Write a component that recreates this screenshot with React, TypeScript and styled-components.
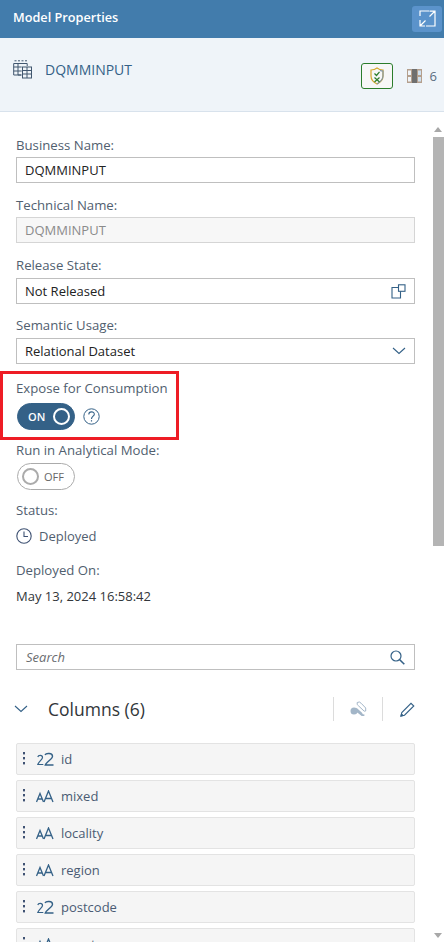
import React from "react";
import styled, { createGlobalStyle } from "styled-components";

const Global = createGlobalStyle`
  html, body { margin: 0; padding: 0; background: #fff; overflow: hidden; }
  body { font-family: "Open Sans", "Noto Sans", Arial, sans-serif; }
  * { box-sizing: border-box; }
`;
const Page = styled.div`width: 444px; height: 942px; overflow: hidden; position: relative; display: flex; flex-direction: column;`;
const TopBar = styled.header`height: 38px; flex: none; background: #427cac; display: flex; align-items: center; justify-content: space-between; padding: 0 2px 0 13px; color: #fff; font-size: 12.7px; font-weight: 600;`;
const TopTitle = styled.span`margin-top: -4px;`;
const ExpandButton = styled.div`width: 30px; height: 26px; margin-top: -1px; border-radius: 3px; background: #5b93cb; display: flex; align-items: center; justify-content: center;`;
const ObjectHeader = styled.section`height: 74px; flex: none; background: #eff4f9; border-bottom: 1px solid #d8e2ec; display: flex; align-items: center; padding: 0 7px 11px 13px;`;
const ObjectName = styled.div`margin-left: 13px; font-size: 14px; color: #346187; flex: 1;`;
const ShieldButton = styled.div`width: 32px; height: 26px; border: 1px solid #2b7d2b; border-radius: 3px; background: #f7f7f7; display: flex; align-items: center; justify-content: center; margin-top: 13px; margin-right: 1px;`;
const ColumnCount = styled.div`display: flex; align-items: center; gap: 8px; margin: 14px 0 0 13px; font-size: 13px; color: #5a6c80;`;
const Body = styled.div`flex: 1; display: flex; min-height: 0;`;
const Content = styled.main`width: 431px; flex: none; padding: 24px 16px 0; overflow: hidden;`;
const Label = styled.div<{ $top?: number }>`font-size: 13.2px; line-height: 18px; color: #51606f; margin-top: ${p => p.$top ?? 0}px;`;
const Field = styled.div<{ $disabled?: boolean; $top?: number }>`
  width: 399px; height: 26px; margin-top: ${p => p.$top ?? 4}px; border: 1px solid #bfbfbf; display: flex; align-items: center; justify-content: space-between;
  padding: 0 8px; font-size: 13px; color: ${p => (p.$disabled ? "#8b8b8b" : "#222")}; background: ${p => (p.$disabled ? "#f7f7f7" : "#fff")};
  border-color: ${p => (p.$disabled ? "#d5d5d5" : "#bfbfbf")};
`;
const SwitchRow = styled.div<{ $top: number }>`display: flex; align-items: center; gap: 8px; margin: ${p => p.$top}px 0 0 1px;`;
const Switch = styled.div<{ $on?: boolean }>`
  width: 58px; height: 27px; border-radius: 14px; display: flex; align-items: center; padding: 0 4px; gap: 5px;
  font-size: 11px; font-weight: ${p => (p.$on ? 600 : 500)};
  background: ${p => (p.$on ? "#346187" : "#fff")}; color: ${p => (p.$on ? "#fff" : "#666")};
  border: 1px solid ${p => (p.$on ? "#346187" : "#ababab")};
  flex-direction: ${p => (p.$on ? "row-reverse" : "row")};
  justify-content: ${p => (p.$on ? "space-between" : "flex-start")};
  padding-left: ${p => (p.$on ? "10px" : "4px")};
`;
const Knob = styled.span<{ $on?: boolean }>`
  width: 17px; height: 17px; border-radius: 50%; flex: none; border: 2px solid ${p => (p.$on ? "#fff" : "#ababab")};
  background: ${p => (p.$on ? "#346187" : "#fff")};
`;
const StatusRow = styled.div`display: flex; align-items: center; gap: 7px; margin-top: 8px; font-size: 13px; line-height: 18px; color: #51606f;`;
const DateText = styled.div`font-size: 13px; line-height: 18px; color: #32363a; margin-top: 8px;`;
const Search = styled(Field)`margin-top: 39px; font-style: italic; color: #6a6d70; padding: 0 9px;`;
const SectionHead = styled.div`display: flex; align-items: center; height: 26px; margin: 26px -16px 0 0;`;
const Chevron = styled.span`margin-left: -2px; display: flex;`;
const SectionTitle = styled.div`font-size: 17.5px; color: #32363a; margin-left: 20px; flex: 1;`;
const ToolDivider = styled.span`width: 1px; height: 24px; background: #dcdcdc;`;
const ToolSlot = styled.span<{ $w: number }>`width: ${p => p.$w}px; display: flex; justify-content: center;`;
const Rows = styled.div`display: flex; flex-direction: column; gap: 5px; margin-top: 21px;`;
const Row = styled.div`width: 399px; height: 32px; flex: none; background: #f5f5f5; border: 1px solid #e3e3e3; border-radius: 2px; display: flex; align-items: center; padding-left: 5px; font-size: 13px; color: #4a5b73;`;
const TypeIcon = styled.span`width: 20px; margin-left: 9px; margin-right: 6px; display: flex; justify-content: center; flex: none;`;
const Scrollbar = styled.aside`width: 13px; flex: none; position: relative; display: flex; flex-direction: column; align-items: flex-end; padding-top: 25px;`;
const Thumb = styled.div`width: 11px; height: 409px; background: #b4b4b4;`;
const Arrow = styled.span<{ $up?: boolean }>`
  position: absolute; right: 2px; ${p => (p.$up ? "top: 15px;" : "bottom: 4px;")} width: 0; height: 0;
  border-left: 4px solid transparent; border-right: 4px solid transparent;
  ${p => (p.$up ? "border-bottom: 5px solid #a8a8a8;" : "border-top: 5px solid #a8a8a8;")}
`;
const Highlight = styled.div`position: absolute; left: 0; top: 371px; width: 179px; height: 69px; border: 3px solid #ee1c25; pointer-events: none;`;

const Grip = () => (
  <svg width="4" height="16" viewBox="0 0 4 16" fill="#3f5273"><rect x="1" y="1" width="2" height="2.4" /><rect x="1" y="6" width="2" height="2.4" /><rect x="1" y="11" width="2" height="2.4" /></svg>
);
const NumIcon = () => (
  <svg width="17" height="14" viewBox="0 0 17 14" fill="none" stroke="#346187" strokeWidth="1.2">
    <path d="M.8 5C1.300 3 5.500 2.700 5.500 5.500c0 2-3.500 3.500-4.700 7h5.500" />
    <path d="M8 3C9 .8 15.500 .8 15.500 4.200c0 3-6 5.500-7.200 8.800H16.500" strokeWidth="1.400" />
  </svg>
);
const TextIcon = () => (
  <svg width="18" height="13" viewBox="0 0 18 13" fill="none" stroke="#346187" strokeWidth="1.3">
    <path d="M.5 12 4 3.500 7.500 12M1.700 9h4.600" />
    <path d="M8 12 12.500 1 17 12M9.700 8.500h5.600" />
  </svg>
);
const rows: { name: string; t: "n" | "a" }[] = [
  { name: "id", t: "n" }, { name: "mixed", t: "a" }, { name: "locality", t: "a" },
  { name: "region", t: "a" }, { name: "postcode", t: "n" }, { name: "country", t: "a" },
];

export default function App() {
  return (
    <Page>
      <Global />
      <TopBar>
        <TopTitle>Model Properties</TopTitle>
        <ExpandButton>
          <svg width="17" height="17" viewBox="0 0 17 17" fill="none" stroke="#fff" strokeWidth="1.2">
            <path d="M1 6V1h9M16 6.500V16H7M10.500 1.200H16V6.500M16 1 10.500 6.500M1 10v6h5M1 16l5.500-5.500" />
          </svg>
        </ExpandButton>
      </TopBar>
      <ObjectHeader>
        <svg width="19" height="19" viewBox="0 0 19 19" fill="none" stroke="#40566f" strokeWidth="1">
          <path d="M1.500 .8h2M5 .8h2M8.500 .8h2M12 .8h2" />
          <path d="M.7 15V3.500h13.500v2.500M.7 7h8M.7 11h8M5 3.500V15h3M.7 15h8" />
          <rect x="9.500" y="7" width="9" height="11" /><path d="M9.500 10.500h9M9.500 14h9M14 7v11" />
        </svg>
        <ObjectName>DQMMINPUT</ObjectName>
        <ShieldButton>
          <svg width="14" height="18" viewBox="0 0 14 18" fill="none">
            <path d="M1 3c2.500 0 4.500-.8 6-2 1.500 1.200 3.500 2 6 2v6c0 4-3 6.500-6 8-3-1.500-6-4-6-8z" stroke="#d3a72c" strokeWidth="1.200" />
            <path d="M10 3.500c1 .3 2 .5 3 .5v5c0 3-2 5.500-6 8" stroke="#7f94a8" strokeWidth="1.100" />
            <path d="M4.500 6.500 6.500 8.500 9.500 4.800" stroke="#2b7d2b" strokeWidth="1.200" />
            <path d="M4.500 10.500l5 4.500M9.500 10.500l-5 4.500" stroke="#2b7d2b" strokeWidth="1.200" />
          </svg>
        </ShieldButton>
        <ColumnCount>
          <svg width="15" height="14" viewBox="0 0 15 14">
            <rect x="0" y="0" width="15" height="14" fill="#b49f8d" />
            <rect x="5" y="0" width="5" height="14" fill="#6f6f6f" />
            <rect x="1" y="1.500" width="3" height="4.500" fill="#eff4f9" /><rect x="1" y="8" width="3" height="4.500" fill="#eff4f9" />
            <rect x="11" y="1.500" width="3" height="4.500" fill="#cfe0ef" /><rect x="11" y="8" width="3" height="4.500" fill="#cfe0ef" />
          </svg>
          6
        </ColumnCount>
      </ObjectHeader>
      <Body>
        <Content>
          <Label>Business Name:</Label>
          <Field $top={3}>DQMMINPUT</Field>
          <Label $top={13}>Technical Name:</Label>
          <Field $disabled $top={3}>DQMMINPUT</Field>
          <Label $top={13}>Release State:</Label>
          <Field>
            Not Released
            <svg width="15" height="15" viewBox="0 0 15 15" fill="none" stroke="#346187" strokeWidth="1.100">
              <rect x="7.500" y=".8" width="6.500" height="6.500" />
              <path d="M7.500 3.500H1v10.500h8.500V7.300" />
            </svg>
          </Field>
          <Label $top={12}>Semantic Usage:</Label>
          <Field>
            Relational Dataset
            <svg width="14" height="8" viewBox="0 0 14 8" fill="none" stroke="#346187" strokeWidth="1.100"><path d="M1 1l6 5.500L13 1" /></svg>
          </Field>
          <Label $top={15}>Expose for Consumption</Label>
          <SwitchRow $top={6}>
            <Switch $on><Knob $on />ON</Switch>
            <svg width="17" height="17" viewBox="0 0 17 17" fill="none" stroke="#346187">
              <circle cx="8.500" cy="8.500" r="7.700" />
              <path d="M5.800 6.500c0-3.500 5.500-3.500 5.500-.3 0 2-2.800 2-2.800 4.800" strokeWidth="1.100" />
              <path d="M8.500 12.200v1.300" strokeWidth="1.200" />
            </svg>
          </SwitchRow>
          <Label $top={11}>Run in Analytical Mode:</Label>
          <SwitchRow $top={4}>
            <Switch><Knob />OFF</Switch>
          </SwitchRow>
          <Label $top={11}>Status:</Label>
          <StatusRow>
            <svg width="16" height="16" viewBox="0 0 16 16" fill="none" stroke="#3f5273" strokeWidth="1.100">
              <circle cx="8" cy="8" r="7.200" /><path d="M8 3.500V8.500H12" />
            </svg>
            Deployed
          </StatusRow>
          <Label $top={16}>Deployed On:</Label>
          <DateText>May 13, 2024 16:58:42</DateText>
          <Search>
            Search
            <svg width="15" height="15" viewBox="0 0 15 15" fill="none" stroke="#346187" strokeWidth="1.200">
              <circle cx="6" cy="6" r="5" /><path d="M9.500 9.500l4.800 4.800" strokeWidth="1.600" />
            </svg>
          </Search>
          <SectionHead>
            <Chevron>
              <svg width="14" height="8" viewBox="0 0 14 8" fill="none" stroke="#346187" strokeWidth="1.100"><path d="M1 1l6 5.500L13 1" /></svg>
            </Chevron>
            <SectionTitle>Columns (6)</SectionTitle>
            <ToolDivider />
            <ToolSlot $w={48}>
              <svg width="17" height="16" viewBox="0 0 17 16" fill="#a3b6c8">
                <path d="M7.200 1.500a3 3 0 0 1 4 .8l4.500 4.700v3l-1.500.2-5.500-5.200a3 3 0 0 1-1.500-3.500z" fill="none" stroke="#a3b6c8" />
                <path d="M4 6.500a3.500 3.500 0 1 1 0 7 3.500 3.500 0 0 1 0-7zM6.500 6.800l5.500 5 .8 1.500 1.700.3-.2 1.400h-2.600L6 10.500z" />
              </svg>
            </ToolSlot>
            <ToolDivider />
            <ToolSlot $w={48}>
              <svg width="15" height="15" viewBox="0 0 15 15" fill="none" stroke="#346187" strokeWidth="1.100">
                <path d="M1 14l.8-3.500L11 1.300l2.800 2.700-9.300 9.200z" /><path d="M1 14l2-.5-1.500-1.500z" fill="#346187" />
              </svg>
            </ToolSlot>
          </SectionHead>
          <Rows>
            {rows.map(r => (
              <Row key={r.name}>
                <Grip />
                <TypeIcon>{r.t === "n" ? <NumIcon /> : <TextIcon />}</TypeIcon>
                {r.name}
              </Row>
            ))}
          </Rows>
        </Content>
        <Scrollbar>
          <Arrow $up />
          <Thumb />
          <Arrow />
        </Scrollbar>
      </Body>
      <Highlight />
    </Page>
  );
}
